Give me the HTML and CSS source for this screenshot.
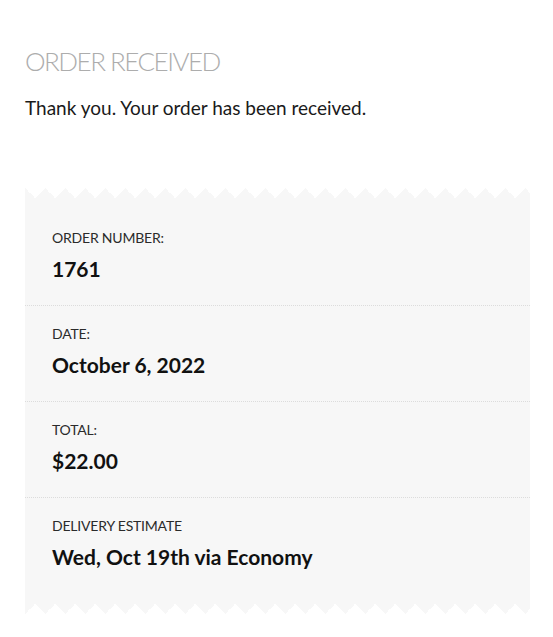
FILE: index.html
```html
<!DOCTYPE html>
<html lang="en">
<head>
<meta charset="utf-8">
<title>Order received</title>
<link rel="stylesheet" href="styles.css">
</head>
<body>
<main class="page">
  <h1 class="title">Order received</h1>
  <p class="thanks">Thank you. Your order has been received.</p>
  <section class="receipt">
    <div class="zigzag" aria-hidden="true"></div>
    <ul class="details">
      <li class="row">
        <span class="label">Order number:</span>
        <strong class="value">1761</strong>
      </li>
      <li class="row">
        <span class="label">Date:</span>
        <strong class="value">October 6, 2022</strong>
      </li>
      <li class="row">
        <span class="label">Total:</span>
        <strong class="value">$22.00</strong>
      </li>
      <li class="row">
        <span class="label">Delivery estimate</span>
        <strong class="value">Wed, Oct 19th via Economy</strong>
      </li>
    </ul>
    <div class="zigzag zigzag-bottom" aria-hidden="true"></div>
  </section>
</main>
</body>
</html>
```

FILE: styles.css
```css
* { box-sizing: border-box; }
html, body { margin: 0; background: #fff; }
body {
  font-family: Lato, "Open Sans", "Liberation Sans", sans-serif;
  color: #1a1a1a;
}
.page {
  padding: 45px 23px 30px 25px;
}
.title {
  margin: 0;
  font-size: 26px;
  line-height: 32px;
  font-weight: 300;
  text-transform: uppercase;
  color: #adadad;
  letter-spacing: -1.5px;
}
.thanks {
  margin: 18px 0 0;
  font-size: 19px;
  line-height: 26px;
  color: #1a1a1a;
}
.receipt {
  margin-top: 67px;
}
.zigzag {
  height: 10px;
  background-image: conic-gradient(from 135deg at 50% 0%, #f7f7f7 0deg 90deg, transparent 90deg 360deg);
  background-size: 20px 10px;
  background-position: -10px 0;
  background-repeat: repeat-x;
}
.zigzag-bottom {
  transform: scaleY(-1);
}
.details {
  list-style: none;
  margin: 0;
  padding: 12px 0 11px;
  background: #f7f7f7;
}
.row {
  display: flex;
  flex-direction: column;
  gap: 7px;
  padding: 18px 27px 22px;
  border-bottom: 1px dotted #dcdcdc;
}
.row:last-child { border-bottom: 0; }
.label {
  font-size: 14px;
  line-height: 20px;
  text-transform: uppercase;
  letter-spacing: -0.2px;
  color: #2b2b2b;
}
.value {
  font-size: 21px;
  line-height: 28px;
  font-weight: 700;
  color: #111;
}
```
